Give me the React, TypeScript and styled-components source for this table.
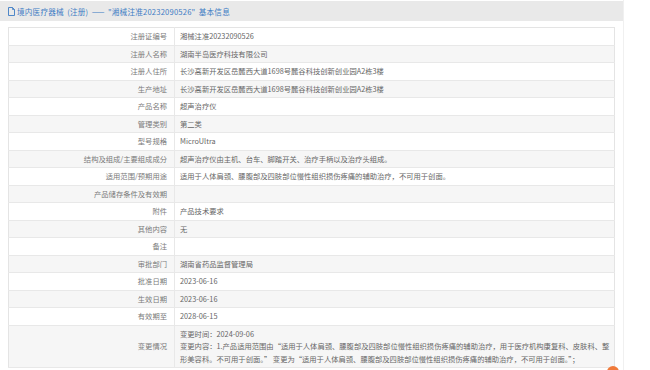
import React from "react";
import styled, { createGlobalStyle } from "styled-components";

const GlobalStyle = createGlobalStyle`
  html, body {
    margin: 0;
    padding: 0;
    background: #fff;
  }
  body {
    font-family: "Noto Sans CJK SC", "Noto Sans", sans-serif;
  }
`;

const Page = styled.div`
  position: relative;
  width: 623px;
  height: 370px;
  border-right: 1px solid #f0f0f0;
  overflow: hidden;
`;

const Header = styled.div`
  height: 20px;
  margin-top: 1px;
  background: #e9e9e9;
  display: flex;
  align-items: center;
  padding-left: 8px;
  gap: 1px;
  color: #3d7cc4;
  font-size: 7.6px;
  letter-spacing: 0.2px;
  word-spacing: 1.5px;
`;

const Body = styled.div`
  padding: 6px 8px 0 8px;
`;

const Table = styled.table`
  width: 607px;
  border-collapse: collapse;
  border: 1px solid #e4e4e4;
  font-size: 7.3px;
  line-height: 12.5px;
`;

const Row = styled.tr<{ $alt?: boolean }>`
  background: ${(p) => (p.$alt ? "#f6f6f6" : "#fff")};
  border-bottom: 1px solid #e8e8e8;
`;

const Label = styled.th`
  width: 158px;
  padding: 2px 7px 2px 0;
  text-align: right;
  font-weight: normal;
  color: #7a7a7a;
  border-right: 1px solid #e8e8e8;
  vertical-align: middle;
  white-space: nowrap;
`;

const Value = styled.td`
  padding: 2px 2px 2px 5px;
  color: #666;
  text-align: left;
  vertical-align: middle;
`;

const FloatBtn = styled.div`
  position: absolute;
  left: 607px;
  top: 366px;
  width: 12px;
  height: 12px;
  border-radius: 50%;
  background: #f07a3a;
`;

const DocIcon = () => (
  <svg width="7" height="9" viewBox="0 0 7 9" style={{ marginRight: 1 }}>
    <path d="M0.5 0.5h4l2 2v6h-6z" fill="none" stroke="#3d7cc4" strokeWidth="0.9" />
    <path d="M4.5 0.5v2h2" fill="none" stroke="#3d7cc4" strokeWidth="0.8" />
  </svg>
);

const rows: [string, React.ReactNode][] = [
  ["注册证编号", "湘械注准20232090526"],
  ["注册人名称", "湖南半岛医疗科技有限公司"],
  ["注册人住所", "长沙高新开发区岳麓西大道1698号麓谷科技创新创业园A2栋3楼"],
  ["生产地址", "长沙高新开发区岳麓西大道1698号麓谷科技创新创业园A2栋3楼"],
  ["产品名称", "超声治疗仪"],
  ["管理类别", "第二类"],
  ["型号规格", "MicroUltra"],
  ["结构及组成/主要组成成分", "超声治疗仪由主机、台车、脚踏开关、治疗手柄以及治疗头组成。"],
  ["适用范围/预期用途", "适用于人体肩颈、腰腹部及四肢部位慢性组织损伤疼痛的辅助治疗，不可用于创面。"],
  ["产品储存条件及有效期", ""],
  ["附件", "产品技术要求"],
  ["其他内容", "无"],
  ["备注", ""],
  ["审批部门", "湖南省药品监督管理局"],
  ["批准日期", "2023-06-16"],
  ["生效日期", "2023-06-16"],
  ["有效期至", "2028-06-15"],
  [
    "变更情况",
    <>
      变更时间：2024-09-06
      <br />
      变更内容：1.产品适用范围由“适用于人体肩颈、腰腹部及四肢部位慢性组织损伤疼痛的辅助治疗，用于医疗机构康复科、皮肤科、整形美容科。不可用于创面。” 变更为“适用于人体肩颈、腰腹部及四肢部位慢性组织损伤疼痛的辅助治疗，不可用于创面。”；
    </>,
  ],
];

const App: React.FC = () => {
  return (
    <Page>
      <GlobalStyle />
      <Header>
        <DocIcon />
        <span>境内医疗器械 (注册) —— "湘械注准20232090526" 基本信息</span>
      </Header>
      <Body>
        <Table>
          <tbody>
            {rows.map(([label, value], i) => (
              <Row key={label} $alt={i % 2 === 1}>
                <Label>{label}</Label>
                <Value>{value}</Value>
              </Row>
            ))}
          </tbody>
        </Table>
      </Body>
      <FloatBtn />
    </Page>
  );
};

export default App;
